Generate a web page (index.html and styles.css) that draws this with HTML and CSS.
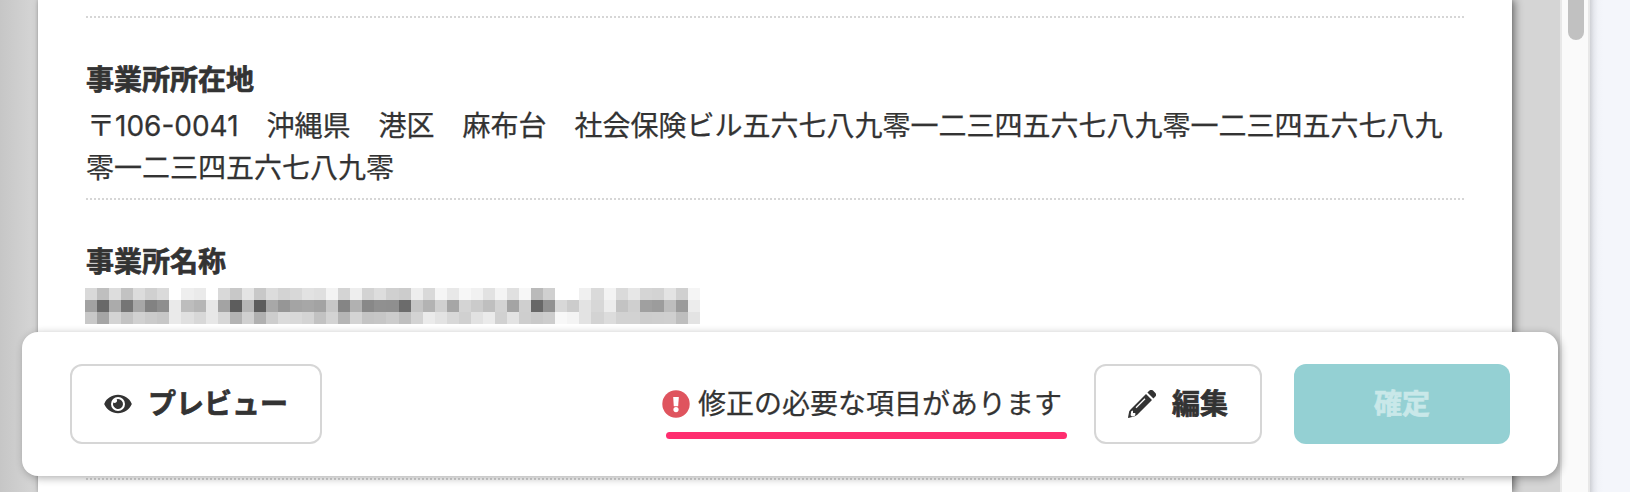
FILE: index.html
```html
<!DOCTYPE html>
<html lang="ja">
<head>
<meta charset="utf-8">
<title>事業所</title>
<link rel="stylesheet" href="styles.css">
</head>
<body>
<div class="viewer">
  <main class="sheet">
    <div class="spacer"></div>
    <section class="field">
      <h2>事業所所在地</h2>
      <p>〒106-0041　沖縄県　港区　麻布台　社会保険ビル五六七八九零一二三四五六七八九零一二三四五六七八九零一二三四五六七八九零</p>
    </section>
    <section class="field field-last">
      <h2>事業所名称</h2>
      <div class="mosaic" id="mosaic"></div>
    </section>
  </main>
</div>
<div class="track"><div class="thumb"></div></div>
<aside class="outside"></aside>
<div class="actions">
  <button class="btn preview">
    <svg class="eye" width="28" height="20" viewBox="0 0 28 20"><path fill="#333" d="M14 .8C7.8.8 2.700 4.300.4 9.400a1.200 1.200 0 0 0 0 1.200C2.700 15.700 7.800 19.200 14 19.200s11.300-3.500 13.600-8.600a1.200 1.200 0 0 0 0-1.200C25.300 4.300 20.200.8 14 .8z"/><circle cx="14" cy="10" r="7" fill="#fff"/><path fill="#333" d="M14 5a5 5 0 1 1-4.800 3.600 2.500 2.500 0 0 0 3.500-3.400Q13.300 5 14 5z"/></svg>
    <span>プレビュー</span>
  </button>
  <div class="notice">
    <svg width="28" height="28" viewBox="0 0 28 28"><circle cx="14" cy="14" r="13.700" fill="#df545e"/><path fill="#fff" d="M11.200 7h5.600l-.6 9.200h-4.400z"/><circle cx="14" cy="19.600" r="2.600" fill="#fff"/></svg>
    <span>修正の必要な項目があります</span>
    <i class="marker"></i>
  </div>
  <button class="btn edit">
    <svg width="28" height="28" viewBox="0 0 28 28"><path fill="#333" d="m19.400 2.600 2.100-2a2.600 2.600 0 0 1 3.500 0l2.400 2.400a2.600 2.600 0 0 1 0 3.500l-2 2.100zM18 4l6 6L9 25l-2.200 1.300L.4 28 0 27.600l1.200-6.400L3 19z"/><path fill="none" stroke="#fff" stroke-width="1.300" d="m8 17.700 9-9"/><path fill="#fff" d="m3.200 21.200 1.800-.7v2.500h2.300v2.100l-.7.900-2.700.6-1.300-1.300z"/></svg>
    <span>編集</span>
  </button>
  <button class="btn confirm" disabled>確定</button>
</div>
<script src="script.js"></script>
</body>
</html>
```
FILE: script.js
```js
// Brightness of each tile in the redacted name, one row per line.
const rows = [
  "d9 bf dd c2 dc d0 da ff ee ea ff d9 c8 e4 c8 dc d3 d8 e2 df f3 d4 ee d3 dd d0 cc ee d9 f5 e8 f7 f1 e2 f4 e0 f7 ba d0 ff ff f0 da f3 da e7 d5 d3 e3 d0 f5",
  "a2 69 ab 75 a7 82 8e ea bd b6 e7 a3 5d b6 5c a8 96 a4 a7 a3 c7 85 b1 88 90 8f 6c c4 b3 d0 a6 d4 cb bf d3 a4 cf 67 91 d8 cc e3 d7 ec c3 cf a0 9c bd 9b ec",
  "c8 a5 d4 c3 d1 cb c7 ea e0 d8 e7 d7 b3 d0 b0 cd db d9 d4 c2 d3 b5 d4 c4 c6 cc bf d3 eb e3 d8 d0 e2 eb d1 e3 ce c9 cd f8 f4 e3 d3 dc d2 d2 cd ce cf be e3"
];
document.getElementById("mosaic").innerHTML = rows
  .flatMap(r => r.split(" "))
  .map(v => `<i style="background:#${v + v + v}"></i>`)
  .join("");
```
FILE: styles.css
```css
* { box-sizing: border-box; }
body {
  margin: 0;
  height: 492px;
  display: flex;
  position: relative;
  overflow: hidden;
  color: #333;
  background: #f4f6fb;
  font: 28px/42px Inter, "Noto Sans CJK JP", sans-serif;
  -webkit-text-stroke: .25px;
}
.viewer {
  width: 1560px;
  padding: 0 48px 0 38px;
  overflow: hidden;
  background: linear-gradient(90deg, #c6c6c6, #d5d5d5 34px);
}
.sheet {
  height: 492px;
  padding: 0 48px;
  background: #fff;
  box-shadow: 3px 0 8px rgba(0, 0, 0, .45), 0 0 3px rgba(0, 0, 0, .15);
}
.spacer { height: 18px; border-bottom: 2px dotted #d6d6d6; }
.field {
  height: 182px;
  padding-top: 41px;
  border-bottom: 2px dotted #d6d6d6;
}
.field-last { height: 280px; }
h2 {
  margin: 0;
  font-size: 28px;
  line-height: 42px;
  font-weight: 700;
  -webkit-text-stroke: .7px;
}
p { margin: 4px 0 0; text-indent: 1px; }
.mosaic {
  display: grid;
  grid-template-columns: repeat(51, 1fr);
  grid-auto-rows: 12px;
  width: 615px;
  margin: 5px 0 0 -1px;
}
.track {
  width: 30px;
  padding-left: 6px;
  border: solid #e8e8e8;
  border-width: 0 2px;
  background: #fafafa;
}
.thumb { width: 16px; height: 40px; border-radius: 0 0 8px 8px; background: #c1c1c1; }
.outside {
  width: 40px;
  background: linear-gradient(90deg, #cfd1d6, #e6e8ee 4px, #f1f3f8 8px, #f4f6fb 13px);
}
.actions {
  position: absolute;
  left: 22px;
  top: 332px;
  width: 1536px;
  height: 144px;
  padding: 32px 48px;
  display: flex;
  align-items: center;
  border-radius: 16px;
  background: #fff;
  box-shadow: 2px 2px 8px rgba(0, 0, 0, .32);
}
.btn {
  height: 80px;
  padding: 0;
  display: flex;
  align-items: center;
  justify-content: center;
  gap: 16px;
  border: 2px solid #d6d6d6;
  border-radius: 12px;
  color: #333;
  background: #fff;
  font: inherit;
  font-weight: 700;
  -webkit-text-stroke: .7px;
}
.preview { width: 252px; }
.edit { width: 168px; margin-right: 32px; }
.confirm { width: 216px; border: 0; color: #c9e8e9; background: #94d0d3; }
.notice {
  position: relative;
  display: flex;
  align-items: center;
  gap: 8px;
  margin: 0 32px 0 auto;
}
.marker {
  position: absolute;
  left: 4px;
  top: 49px;
  width: 401px;
  height: 7px;
  border-radius: 4px;
  background: #ff2d6f;
}
```
